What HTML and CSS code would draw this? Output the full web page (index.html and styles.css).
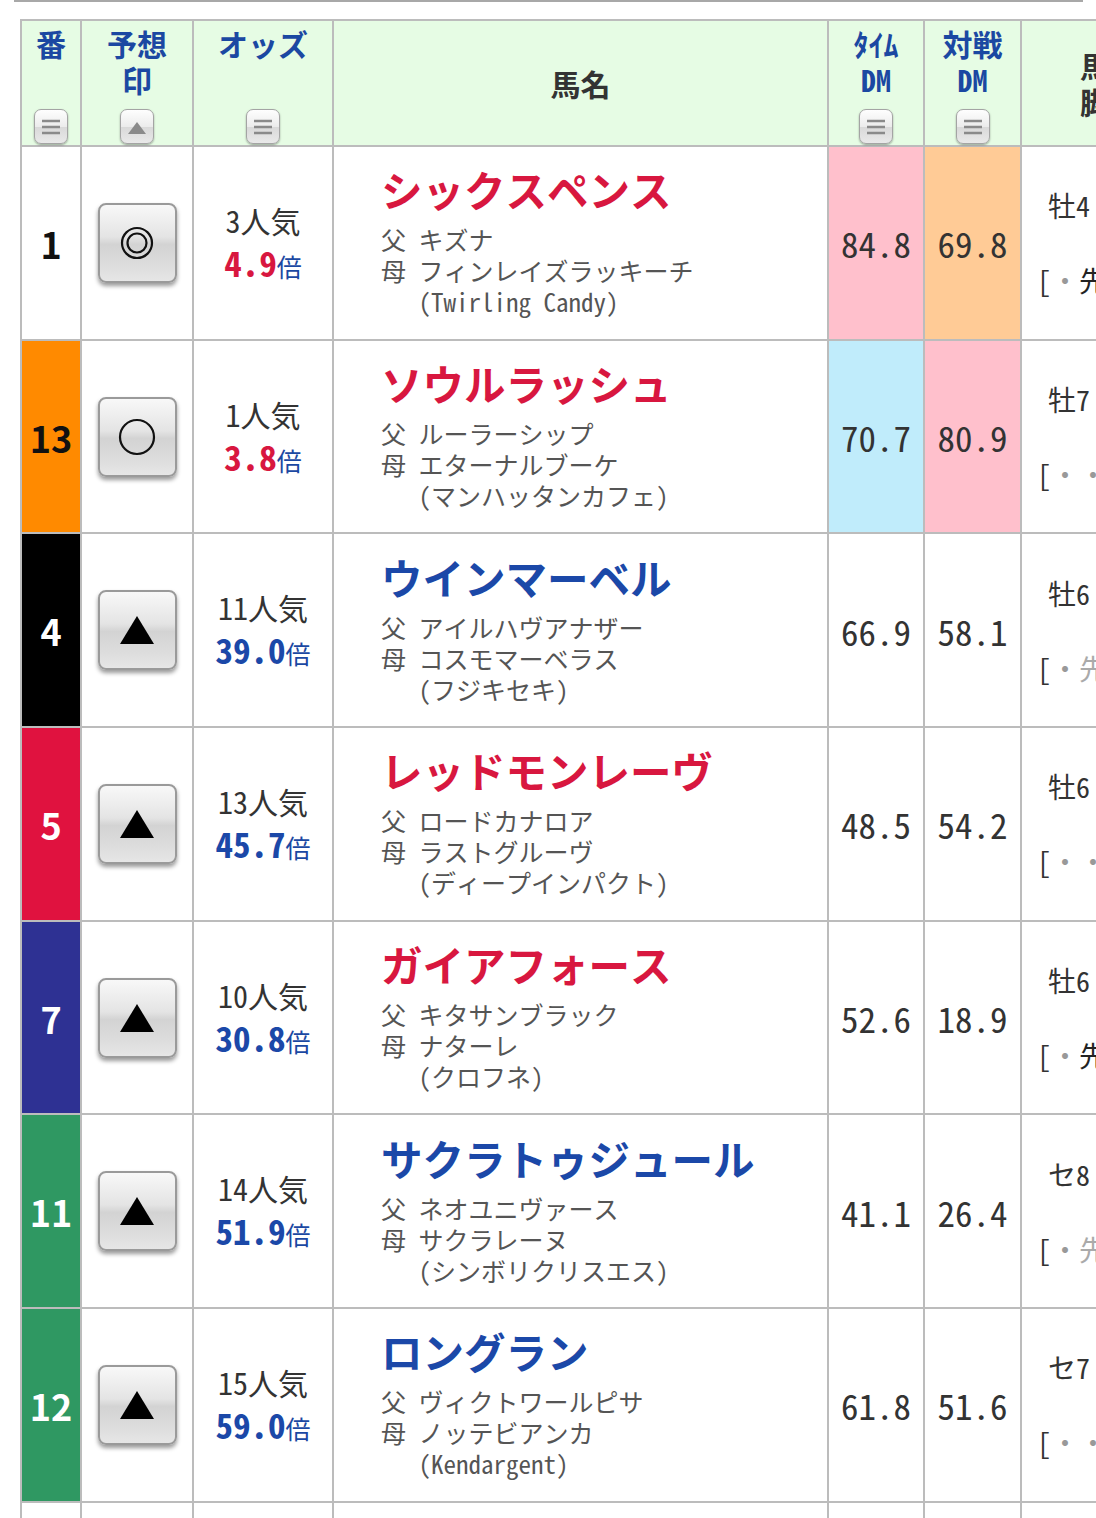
FILE: index.html
```html
<!DOCTYPE html>
<html lang="ja">
<head>
<meta charset="utf-8">
<title>出馬表</title>
<link rel="stylesheet" href="styles.css">
</head>
<body>
<div class="topline"></div>
<div class="grid">
  <!-- header -->
  <div class="th"><span>番</span><span class="sort"><svg width="22" height="20" viewBox="0 0 22 20"><path d="M2 4h18M2 10h18M2 16h18" stroke="#8a8a8a" stroke-width="2.4"/></svg></span></div>
  <div class="th"><span>予想<br>印</span><span class="sort"><svg width="22" height="20" viewBox="0 0 22 20"><polygon points="2,17 11,5 20,17" fill="#8a8a8a"/></svg></span></div>
  <div class="th"><span>オッズ</span><span class="sort"><svg width="22" height="20" viewBox="0 0 22 20"><path d="M2 4h18M2 10h18M2 16h18" stroke="#8a8a8a" stroke-width="2.4"/></svg></span></div>
  <div class="th th-mid"><span>馬名</span></div>
  <div class="th"><span>ﾀｲﾑ<br>DM</span><span class="sort"><svg width="22" height="20" viewBox="0 0 22 20"><path d="M2 4h18M2 10h18M2 16h18" stroke="#8a8a8a" stroke-width="2.4"/></svg></span></div>
  <div class="th"><span>対戦<br>DM</span><span class="sort"><svg width="22" height="20" viewBox="0 0 22 20"><path d="M2 4h18M2 10h18M2 16h18" stroke="#8a8a8a" stroke-width="2.4"/></svg></span></div>
  <div class="th th-mid th-dark"><span>馬齢<br>脚質</span></div>

  <!-- row 1 -->
  <div class="num f-white">1</div>
  <div class="mark"><span class="btn"><svg width="40" height="40" viewBox="0 0 40 40"><circle cx="20" cy="20" r="15" fill="none" stroke="#111" stroke-width="2.2"/><circle cx="20" cy="20" r="9.5" fill="none" stroke="#111" stroke-width="2.2"/></svg></span></div>
  <div class="odds"><span class="pop">3人気</span><span class="val red">4.9<span class="bai">倍</span></span></div>
  <div class="name"><span class="hname red">シックスペンス</span><span class="sub sub-first">父 キズナ</span><span class="sub">母 フィンレイズラッキーチ</span><span class="sub ind">(Twirling Candy)</span></div>
  <div class="dm bg-pink">84.8</div>
  <div class="dm bg-orange">69.8</div>
  <div class="rc"><span>牡4</span><span>[<i class="dot">・</i><b class="dark">先</b></span></div>

  <!-- row 2 -->
  <div class="num f-orange">13</div>
  <div class="mark"><span class="btn"><svg width="40" height="40" viewBox="0 0 40 40"><circle cx="20" cy="20" r="17" fill="none" stroke="#111" stroke-width="2.2"/></svg></span></div>
  <div class="odds"><span class="pop">1人気</span><span class="val red">3.8<span class="bai">倍</span></span></div>
  <div class="name"><span class="hname red">ソウルラッシュ</span><span class="sub sub-first">父 ルーラーシップ</span><span class="sub">母 エターナルブーケ</span><span class="sub ind">(マンハッタンカフェ)</span></div>
  <div class="dm bg-blue">70.7</div>
  <div class="dm bg-pink">80.9</div>
  <div class="rc"><span>牡7</span><span>[<i class="dot">・</i><i class="dot">・</i></span></div>

  <!-- row 3 -->
  <div class="num f-black">4</div>
  <div class="mark"><span class="btn"><svg width="40" height="40" viewBox="0 0 40 40"><polygon points="3,34 20,6 37,34" fill="#000"/></svg></span></div>
  <div class="odds"><span class="pop">11人気</span><span class="val blue">39.0<span class="bai">倍</span></span></div>
  <div class="name"><span class="hname blue">ウインマーベル</span><span class="sub sub-first">父 アイルハヴアナザー</span><span class="sub">母 コスモマーベラス</span><span class="sub ind">(フジキセキ)</span></div>
  <div class="dm">66.9</div>
  <div class="dm">58.1</div>
  <div class="rc"><span>牡6</span><span>[<i class="dot">・</i><b class="light">先</b></span></div>

  <!-- row 4 -->
  <div class="num f-red">5</div>
  <div class="mark"><span class="btn"><svg width="40" height="40" viewBox="0 0 40 40"><polygon points="3,34 20,6 37,34" fill="#000"/></svg></span></div>
  <div class="odds"><span class="pop">13人気</span><span class="val blue">45.7<span class="bai">倍</span></span></div>
  <div class="name"><span class="hname red">レッドモンレーヴ</span><span class="sub sub-first">父 ロードカナロア</span><span class="sub">母 ラストグルーヴ</span><span class="sub ind">(ディープインパクト)</span></div>
  <div class="dm">48.5</div>
  <div class="dm">54.2</div>
  <div class="rc"><span>牡6</span><span>[<i class="dot">・</i><i class="dot">・</i></span></div>

  <!-- row 5 -->
  <div class="num f-blue">7</div>
  <div class="mark"><span class="btn"><svg width="40" height="40" viewBox="0 0 40 40"><polygon points="3,34 20,6 37,34" fill="#000"/></svg></span></div>
  <div class="odds"><span class="pop">10人気</span><span class="val blue">30.8<span class="bai">倍</span></span></div>
  <div class="name"><span class="hname red">ガイアフォース</span><span class="sub sub-first">父 キタサンブラック</span><span class="sub">母 ナターレ</span><span class="sub ind">(クロフネ)</span></div>
  <div class="dm">52.6</div>
  <div class="dm">18.9</div>
  <div class="rc"><span>牡6</span><span>[<i class="dot">・</i><b class="dark">先</b></span></div>

  <!-- row 6 -->
  <div class="num f-green">11</div>
  <div class="mark"><span class="btn"><svg width="40" height="40" viewBox="0 0 40 40"><polygon points="3,34 20,6 37,34" fill="#000"/></svg></span></div>
  <div class="odds"><span class="pop">14人気</span><span class="val blue">51.9<span class="bai">倍</span></span></div>
  <div class="name"><span class="hname blue">サクラトゥジュール</span><span class="sub sub-first">父 ネオユニヴァース</span><span class="sub">母 サクラレーヌ</span><span class="sub ind">(シンボリクリスエス)</span></div>
  <div class="dm">41.1</div>
  <div class="dm">26.4</div>
  <div class="rc"><span>セ8</span><span>[<i class="dot">・</i><b class="light">先</b></span></div>

  <!-- row 7 -->
  <div class="num f-green">12</div>
  <div class="mark"><span class="btn"><svg width="40" height="40" viewBox="0 0 40 40"><polygon points="3,34 20,6 37,34" fill="#000"/></svg></span></div>
  <div class="odds"><span class="pop">15人気</span><span class="val blue">59.0<span class="bai">倍</span></span></div>
  <div class="name"><span class="hname blue">ロングラン</span><span class="sub sub-first">父 ヴィクトワールピサ</span><span class="sub">母 ノッテビアンカ</span><span class="sub ind">(Kendargent)</span></div>
  <div class="dm">61.8</div>
  <div class="dm">51.6</div>
  <div class="rc"><span>セ7</span><span>[<i class="dot">・</i><i class="dot">・</i></span></div>

  <!-- row 8 (cut off) -->
  <div class="cell"></div><div class="cell"></div><div class="cell"></div><div class="cell"></div><div class="cell"></div><div class="cell"></div><div class="cell"></div>
</div>
</body>
</html>
```

FILE: styles.css
```css
html, body {
  margin: 0;
  padding: 0;
  background: #fff;
  overflow: hidden;
}
body {
  width: 1096px;
  height: 1518px;
  font-family: "Noto Sans Mono CJK JP", "Noto Sans CJK JP", "DejaVu Sans Mono", monospace;
  color: #333;
}
.topline {
  height: 0;
  border-top: 2px solid #a8a8a8;
  margin: 0 13px 0 14px;
}
.grid {
  display: grid;
  grid-template-columns: 58px 110px 138px 493px 94px 95px 176px;
  grid-template-rows: 124px repeat(8, 191.7px);
  gap: 2px;
  padding: 2px;
  background: #bcbcbc;
  margin: 17px 0 0 20px;
  width: max-content;
}
.grid > div {
  background: #fff;
  min-width: 0;
}

/* header */
.grid > .th {
  background: #e6fce4;
  display: flex;
  flex-direction: column;
  align-items: center;
  justify-content: space-between;
  padding-top: 4px;
  font-weight: bold;
  font-size: 30px;
  line-height: 36px;
  color: #1b48a2;
  text-align: center;
  box-sizing: border-box;
}
.grid > .th-mid {
  justify-content: center;
  padding-top: 0;
  color: #333;
}
.sort {
  width: 34px;
  height: 35px;
  box-sizing: border-box;
  border: 1px solid #a4a4a4;
  border-radius: 7px;
  background: linear-gradient(#fefefe, #ececec 50%, #d9d9d9 52%, #e9e9e9);
  box-shadow: 0 1px 2px rgba(0,0,0,0.35);
  display: flex;
  align-items: center;
  justify-content: center;
  margin-bottom: 1px;
}

/* number */
.grid > .num {
  display: flex;
  align-items: center;
  justify-content: center;
  font-family: "Noto Sans CJK JP", sans-serif;
  font-weight: bold;
  font-size: 36px;
  color: #fff;
}
.grid > .f-white { background: #fff; color: #111; }
.grid > .f-orange { background: #ff8a00; color: #111; }
.grid > .f-black { background: #000; }
.grid > .f-red { background: #e0123f; }
.grid > .f-blue { background: #2e3193; }
.grid > .f-green { background: #2f9862; }

/* mark button */
.grid > .mark {
  display: flex;
  align-items: center;
  justify-content: center;
}
.btn {
  width: 79px;
  height: 80px;
  box-sizing: border-box;
  border: 2px solid #9a9a9a;
  border-radius: 8px;
  background: linear-gradient(#f8f8f8, #e4e4e4 42%, #d3d3d3 52%, #dddddd 80%, #e6e6e6);
  box-shadow: 0 3px 4px rgba(0,0,0,0.4);
  display: flex;
  align-items: center;
  justify-content: center;
}

/* odds */
.grid > .odds {
  display: flex;
  flex-direction: column;
  align-items: center;
  justify-content: center;
  line-height: 42px;
}
.pop {
  font-size: 30px;
  color: #333;
}
.val {
  font-size: 35px;
  font-weight: bold;
}
.bai {
  font-size: 25px;
  font-weight: normal;
  color: #1b48a2;
}
.red { color: #d8173f; }
.blue { color: #1b48a8; }

/* name */
.grid > .name {
  display: flex;
  flex-direction: column;
  justify-content: center;
  align-items: flex-start;
  padding-left: 47px;
  padding-bottom: 4px;
  box-sizing: border-box;
}
.hname {
  font-family: "Noto Sans CJK JP", sans-serif;
  font-weight: bold;
  font-size: 41.5px;
  font-kerning: none;
  font-feature-settings: "kern" 0, "palt" 0;
  line-height: 50px;
  white-space: nowrap;
}
.sub {
  font-size: 25px;
  line-height: 31px;
  color: #555;
  white-space: nowrap;
}
.sub-first { margin-top: 10px; }
.ind { padding-left: 1.5em; }

/* DM */
.grid > .dm {
  display: flex;
  align-items: center;
  justify-content: center;
  font-size: 35px;
  color: #333;
}
.grid > .bg-pink { background: #ffc0cc; }
.grid > .bg-orange { background: #ffcb96; }
.grid > .bg-blue { background: #c0ecfb; }

/* right column */
.grid > .rc {
  display: flex;
  flex-direction: column;
  justify-content: center;
  gap: 39px;
  padding-left: 15px;
  font-size: 28px;
  line-height: 36px;
  color: #333;
  white-space: nowrap;
}
.rc span:first-child { padding-left: 11px; }
.dot {
  font-style: normal;
  color: #999;
}
.dark { font-weight: normal; color: #222; }
.light { font-weight: normal; color: #aaa; }
```
